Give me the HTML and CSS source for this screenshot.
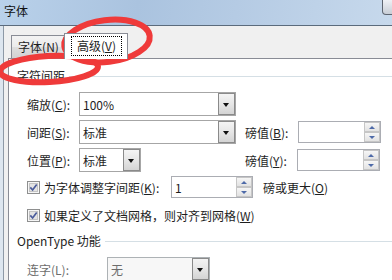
FILE: index.html
```html
<!DOCTYPE html>
<html lang="zh-CN">

<head>
    <meta charset="UTF-8">
    <title>字体</title>
    <link rel="stylesheet" href="styles.css">
</head>

<body>
    <div class="window">
        <div class="titlebar">
            <span class="title">字体</span>
            <div class="close-btn"></div>
        </div>

        <div class="client">
            <div class="tabs">
                <div class="tab">字体(<u>N</u>)</div>
                <div class="tab active"><span class="focus">高级(<u>V</u>)</span></div>
            </div>

            <div class="panel">
                <div class="group-title"><span>字符间距</span></div>

                <div class="row first">
                    <label class="lbl">缩放(<u>C</u>):</label>
                    <div class="combo wide"><span class="value">100%</span><span class="drop"></span></div>
                </div>
                <div class="row">
                    <label class="lbl">间距(<u>S</u>):</label>
                    <div class="combo wide"><span class="value">标准</span><span class="drop"></span></div>
                    <label class="lbl pt">磅值(<u>B</u>):</label>
                    <div class="spin"><span class="spin-btns"><span class="up"></span><span class="down"></span></span></div>
                </div>
                <div class="row">
                    <label class="lbl">位置(<u>P</u>):</label>
                    <div class="combo narrow"><span class="value">标准</span><span class="drop"></span></div>
                    <label class="lbl pt far">磅值(<u>Y</u>):</label>
                    <div class="spin"><span class="spin-btns"><span class="up"></span><span class="down"></span></span></div>
                </div>

                <div class="row check-row">
                    <svg class="check" width="13" height="13" viewBox="0 0 13 13">
                        <rect x="0.5" y="0.5" width="12" height="12" fill="#f6f6f6" stroke="#8e8f8f"/>
                        <rect x="2.5" y="2.5" width="8" height="8" fill="#e4e4e4" stroke="#c4c4c4"/>
                        <path d="M3.3 6.4 L5.6 9 L9.7 3.4" fill="none" stroke="#4b5c9c" stroke-width="1.7"/>
                    </svg>
                    <span class="check-text">为字体调整字间距(<u>K</u>):</span>
                    <div class="spin small"><span class="value">1</span><span class="spin-btns"><span class="up"></span><span class="down"></span></span></div>
                    <span class="after">磅或更大(<u>O</u>)</span>
                </div>
                <div class="row check-row second">
                    <svg class="check" width="13" height="13" viewBox="0 0 13 13">
                        <rect x="0.5" y="0.5" width="12" height="12" fill="#f6f6f6" stroke="#8e8f8f"/>
                        <rect x="2.5" y="2.5" width="8" height="8" fill="#e4e4e4" stroke="#c4c4c4"/>
                        <path d="M3.3 6.4 L5.6 9 L9.7 3.4" fill="none" stroke="#4b5c9c" stroke-width="1.7"/>
                    </svg>
                    <span class="check-text long">如果定义了文档网格，则对齐到网格(<u>W</u>)</span>
                </div>

                <div class="group-title opentype"><span>OpenType 功能</span></div>

                <div class="row disabled">
                    <label class="lbl liga">连字(L):</label>
                    <div class="combo liga-box"><span class="value">无</span><span class="drop"></span></div>
                </div>
            </div>
        </div>

        <!-- red marks drawn over the dialog -->
        <svg class="marks" width="392" height="280" viewBox="0 0 392 280">
            <ellipse cx="107" cy="41" rx="43" ry="21" transform="rotate(-7 107 41)" fill="none" stroke="#ef3a3a" stroke-width="6"/>
            <ellipse cx="49" cy="69" rx="49" ry="13" transform="rotate(-3 49 69)" fill="none" stroke="#ef3a3a" stroke-width="6"/>
        </svg>
    </div>
</body>

</html>
```

FILE: styles.css
```css
body {
    margin: 0;
    background-color: white;
    font-family: "Noto Sans CJK SC", "Microsoft YaHei", sans-serif;
    font-size: 12px;
    color: #1e1e1e;
}

.window {
    position: relative;
    width: 392px;
    height: 280px;
    overflow: hidden;
    background-color: #dde6ef;
}

.titlebar {
    height: 25px;
    display: flex;
    align-items: flex-start;
    padding-left: 4px;
    background: linear-gradient(100deg, #b9d1ea 0%, #aac3df 35%, #b5cbe4 60%, #c7d9ec 100%);
    border-bottom: 1px solid #5b6b7c;
}

.title {
    margin-top: 3px;
    line-height: 16px;
    color: #111;
}

.close-btn {
    margin-left: auto;
    margin-right: -4px;
    width: 12px;
    height: 14px;
    border: 1px solid #5d6570;
    border-top: none;
    border-radius: 0 0 0 4px;
    background: linear-gradient(#eef1f5, #c8ced6);
}

.client {
    height: 254px;
    margin-left: 3px;
    padding-left: 4px;
    border-left: 1px solid #8d99a6;
    background-color: #f0f0f0;
}

.tabs {
    height: 32px;
    display: flex;
    align-items: flex-end;
}

.tab {
    box-sizing: border-box;
    height: 23px;
    width: 55px;
    margin-left: 3px;
    border: 1px solid #898c95;
    border-bottom: none;
    background: linear-gradient(#f3f3f3, #ebebeb 50%, #dedede 51%, #d2d2d2);
    text-align: center;
    line-height: 21px;
}

.tab.active {
    position: relative;
    z-index: 1;
    width: 64px;
    height: 26px;
    margin-left: -2px;
    margin-bottom: -1px;
    background: white;
    text-align: left;
    line-height: normal;
}

.tab .focus {
    display: block;
    box-sizing: border-box;
    width: 51px;
    height: 20px;
    margin: 2px 0 0 6px;
    border: 1px dotted #000;
    text-align: center;
    line-height: 18px;
}

.panel {
    height: 230px;
    padding: 10px 0 0 8px;
    border-top: 1px solid #898c95;
    border-left: 1px solid #898c95;
    background-color: white;
}

.group-title {
    display: flex;
    align-items: center;
    height: 14px;
    line-height: 14px;
}

.group-title::after {
    content: "";
    flex: 1;
    height: 1px;
    margin-left: 4px;
    background-color: #d5dfe5;
}

.group-title.opentype {
    margin-top: 8px;
}

.row {
    display: flex;
    align-items: center;
    height: 24px;
    padding-left: 10px;
    margin-top: 4px;
}

.row.first {
    margin-top: 9px;
}

.lbl {
    width: 52px;
    flex-shrink: 0;
}

.lbl.pt {
    margin-left: 9px;
    width: 53px;
}

.lbl.pt.far {
    margin-left: 104px;
    width: 52px;
}

u {
    text-decoration: underline;
    text-underline-offset: 1px;
}

.combo {
    box-sizing: border-box;
    height: 24px;
    display: flex;
    align-items: center;
    border: 1px solid #a6a6a6;
    background-color: white;
}

.combo.wide {
    width: 157px;
}

.combo.narrow {
    width: 62px;
}

.combo .value {
    padding-left: 3px;
}

.combo .drop {
    position: relative;
    box-sizing: border-box;
    margin-left: auto;
    width: 17px;
    height: 22px;
    border: 1px solid #8a8a8a;
    background: linear-gradient(#f4f4f4, #e6e6e6 50%, #d4d4d4);
}

.combo .drop::after {
    content: "";
    position: absolute;
    left: 4px;
    top: 9px;
    border-left: 3.5px solid transparent;
    border-right: 3.5px solid transparent;
    border-top: 4px solid #111;
}

.spin {
    box-sizing: border-box;
    width: 83px;
    height: 22px;
    display: flex;
    align-items: center;
    justify-content: flex-end;
    border: 1px solid #abadb3;
    background-color: white;
}

.spin.small {
    width: 82px;
    justify-content: space-between;
}

.spin .value {
    padding-left: 3px;
}

.spin-btns {
    display: flex;
    flex-direction: column;
    width: 16px;
    height: 20px;
}

.spin-btns span {
    position: relative;
    box-sizing: border-box;
    height: 10px;
    border: 1px solid #c6c6c6;
    background: linear-gradient(#f6f6f6, #e2e2e2);
}

.spin-btns span::after {
    content: "";
    position: absolute;
    left: 4px;
    top: 3px;
    border-left: 3px solid transparent;
    border-right: 3px solid transparent;
}

.spin-btns .up::after {
    border-bottom: 3px solid #4e6aa8;
}

.spin-btns .down::after {
    border-top: 3px solid #4e6aa8;
}

.check-row {
    height: 22px;
}

.check-row.second {
    margin-top: 6px;
}

.check {
    flex-shrink: 0;
}

.check-text {
    width: 127px;
    margin-left: 4px;
    white-space: nowrap;
}

.check-text.long {
    width: auto;
}

.after {
    margin-left: 10px;
}

.row.disabled {
    margin-top: 9px;
    color: #6d6d6d;
}

.lbl.liga {
    width: 80px;
}

.combo.liga-box {
    width: 103px;
    border-color: #adb2b5;
    background-color: #f7f7f7;
}

.marks {
    position: absolute;
    left: 0;
    top: 0;
    pointer-events: none;
}
```
